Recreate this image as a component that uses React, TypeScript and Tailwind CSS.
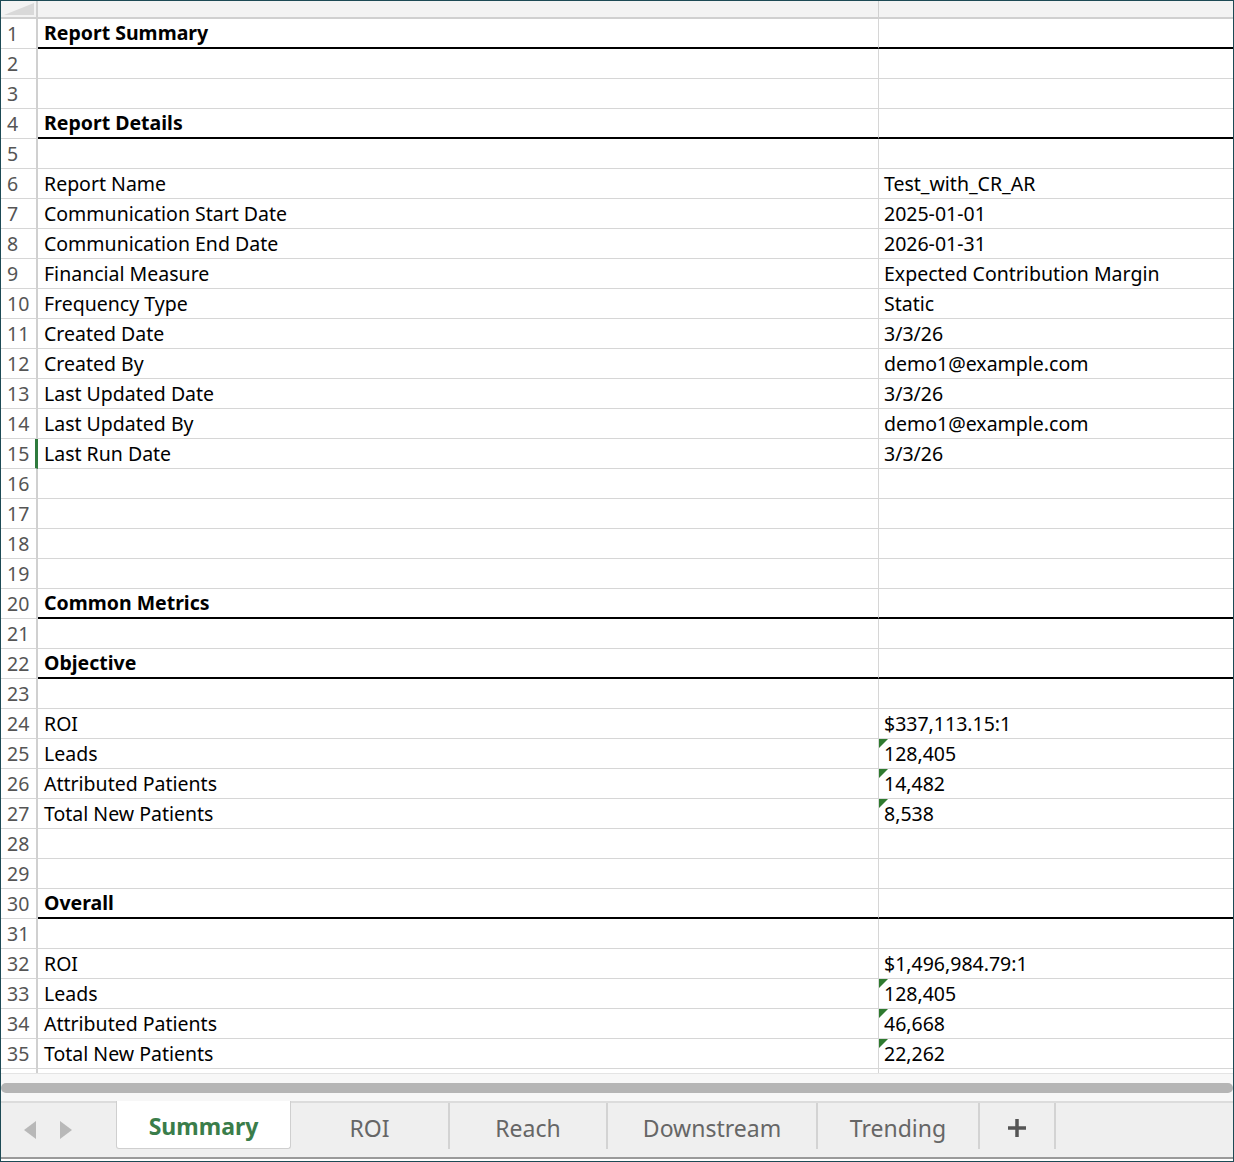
const rows: Array<[string, string, boolean?, boolean?]> = [
	['Report Summary', '', true],
	['', ''],
	['', ''],
	['Report Details', '', true],
	['', ''],
	['Report Name', 'Test_with_CR_AR'],
	['Communication Start Date', '2025-01-01'],
	['Communication End Date', '2026-01-31'],
	['Financial Measure', 'Expected Contribution Margin'],
	['Frequency Type', 'Static'],
	['Created Date', '3/3/26'],
	['Created By', 'demo1@example.com'],
	['Last Updated Date', '3/3/26'],
	['Last Updated By', 'demo1@example.com'],
	['Last Run Date', '3/3/26'],
	['', ''],
	['', ''],
	['', ''],
	['', ''],
	['Common Metrics', '', true],
	['', ''],
	['Objective', '', true],
	['', ''],
	['ROI', '$337,113.15:1'],
	['Leads', '128,405', false, true],
	['Attributed Patients', '14,482', false, true],
	['Total New Patients', '8,538', false, true],
	['', ''],
	['', ''],
	['Overall', '', true],
	['', ''],
	['ROI', '$1,496,984.79:1'],
	['Leads', '128,405', false, true],
	['Attributed Patients', '46,668', false, true],
	['Total New Patients', '22,262', false, true],
]

const tabs = [
	['ROI', 'w-[159px]'],
	['Reach', 'w-[158px]'],
	['Downstream', 'w-[210px]'],
	['Trending', 'w-[162px]'],
]

export default function App() {
	return (
		<div className="h-[1162px] w-[1234px] overflow-hidden border border-[#1d4a55] bg-white font-['Noto_Sans',sans-serif] text-[19.5px] text-black">
			{/* column header */}
			<div className="flex h-[18px] border-b-2 border-[#d0d0d0] bg-[#f3f3f3]">
				<div className="relative w-[37px] border-r-2 border-[#d0d0d0]">
					<div className="absolute bottom-[2px] right-[2px] h-0 w-0 border-b-[12px] border-l-[30px] border-b-[#d9d9d9] border-l-transparent" />
				</div>
				<div className="w-[841px] border-r border-[#d0d0d0]" />
				<div className="flex-1" />
			</div>
			{rows.map(([a, b, head, flag], i) => {
				const n = i + 1
				const sel = n === 15
				return (
					<div key={n} className="flex h-[30px]">
						<div
							className={`flex w-[37px] items-center pl-[6px] text-[#555] ${sel ? 'border-r-[3px] border-[#2f7a3d] text-[#2f7a3d]' : 'border-r-2 border-[#d0d0d0]'} border-b border-b-[#d6d6d6]`}
						>
							{n}
						</div>
						<div
							className={`flex w-[841px] items-center border-r border-[#d6d6d6] pl-[6px] ${head ? 'border-b-2 border-b-black font-bold' : 'border-b border-b-[#d6d6d6]'}`}
						>
							{a}
						</div>
						<div
							className={`relative flex flex-1 items-center pl-[5px] ${head ? 'border-b-2 border-b-black' : 'border-b border-b-[#d6d6d6]'}`}
						>
							{flag ? (
								<div className="absolute left-0 top-0 h-0 w-0 border-r-[9px] border-t-[9px] border-r-transparent border-t-[#2f7a2f]" />
							) : null}
							{b}
						</div>
					</div>
				)
			})}
			<div className="flex h-[4px]">
				<div className="w-[37px] border-r-2 border-[#d0d0d0]" />
				<div className="w-[841px] border-r border-[#d6d6d6]" />
			</div>
			{/* scrollbar */}
			<div className="flex h-[28px] flex-col justify-center border-t border-[#e4e4e4] bg-[#f7f7f7]">
				<div className="h-[10px] rounded-full bg-[#b5b5b5]" />
			</div>
			{/* sheet tabs */}
			<div className="flex h-[58px] border-t-2 border-b-2 border-t-[#dcdcdc] border-b-[#9a9a9a] bg-[#efefef] font-['Liberation_Sans',Arial,sans-serif] text-[23px] text-[#666]">
				<div className="flex w-[115px] items-center gap-[22px] pl-[22px] text-[#b8b8b8]">
					<svg width="14" height="20" viewBox="0 0 14 20"><path d="M13 1 L1 10 L13 19 Z" fill="currentColor" /></svg>
					<svg width="14" height="20" viewBox="0 0 14 20"><path d="M1 1 L13 10 L1 19 Z" fill="currentColor" /></svg>
				</div>
				<div className="-mt-[2px] mb-[8px] flex w-[175px] items-center justify-center rounded-b-[3px] border-x border-b border-[#cfcfcf] bg-white pt-[4px] font-bold text-[#3a7d4a]">
					Summary
				</div>
				{tabs.map(([t, w]) => (
					<div key={t} className={`mb-[8px] flex items-center justify-center border-r-2 border-[#d3d3d3] pt-[4px] ${w}`}>
						{t}
					</div>
				))}
				<div className="mb-[8px] flex w-[76px] items-center justify-center border-r-2 border-[#d3d3d3] pt-[4px] text-[#555]">
					<svg width="22" height="22" viewBox="0 0 22 22"><path d="M11 2v18M2 11h18" stroke="currentColor" strokeWidth="3.5" /></svg>
				</div>
			</div>
		</div>
	)
}
